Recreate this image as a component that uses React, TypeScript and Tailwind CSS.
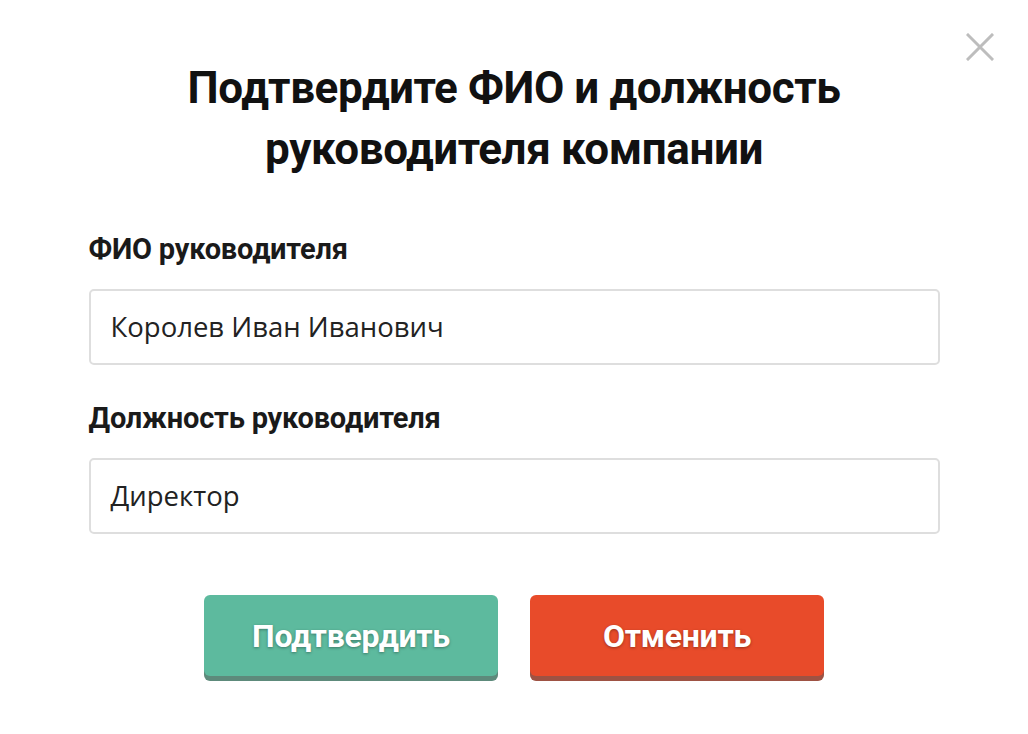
import React from "react";

export default function App() {
  return (
    <div className="relative w-[1028px] h-[734px] bg-white overflow-hidden">
      <button className="absolute left-[965px] top-[32px] w-[30px] h-[30px] flex items-center justify-center">
        <svg width="28" height="28" viewBox="0 0 28 28">
          <path d="M2 2 L26 26 M26 2 L2 26" stroke="#bdbdbd" strokeWidth="3" strokeLinecap="square" />
        </svg>
      </button>
      <div className="flex flex-col items-center pt-[58px]">
        <h1 className="font-['Roboto','Noto_Sans',sans-serif] text-center text-[44px] leading-[61px] font-bold text-[#111] tracking-[-0.4px]">
          Подтвердите ФИО и должность
          <br />
          руководителя компании
        </h1>
        <div className="w-[851px] mt-[53px] flex flex-col">
          <label className="font-['Roboto','Noto_Sans',sans-serif] text-[29px] leading-[32px] font-bold text-[#1a1a1a] tracking-[-0.2px]">
            ФИО руководителя
          </label>
          <div className="font-['Open_Sans','Noto_Sans',sans-serif] mt-[24px] h-[76px] rounded-[5px] border-2 border-[#dedede] flex items-center px-[20px] text-[27.5px] text-[#222]">
            Королев Иван Иванович
          </div>
          <label className="font-['Roboto','Noto_Sans',sans-serif] mt-[37px] text-[29px] leading-[32px] font-bold text-[#1a1a1a] tracking-[-0.2px]">
            Должность руководителя
          </label>
          <div className="font-['Open_Sans','Noto_Sans',sans-serif] mt-[24px] h-[76px] rounded-[5px] border-2 border-[#dedede] flex items-center px-[20px] text-[27.5px] text-[#222]">
            Директор
          </div>
        </div>
        <div className="mt-[61px] flex gap-[32px]">
          <button className="font-['Roboto','Noto_Sans',sans-serif] w-[294px] h-[81px] rounded-[6px] bg-[#5dba9e] shadow-[0_5px_0_#5d8a7b] text-white text-[32px] font-bold tracking-[-0.3px] [text-shadow:0_1px_3px_rgba(0,0,0,0.35)]">
            Подтвердить
          </button>
          <button className="font-['Roboto','Noto_Sans',sans-serif] w-[294px] h-[81px] rounded-[6px] bg-[#e84b2a] shadow-[0_5px_0_#9e5243] text-white text-[32px] font-bold tracking-[-0.3px] [text-shadow:0_1px_3px_rgba(0,0,0,0.35)]">
            Отменить
          </button>
        </div>
      </div>
    </div>
  );
}
